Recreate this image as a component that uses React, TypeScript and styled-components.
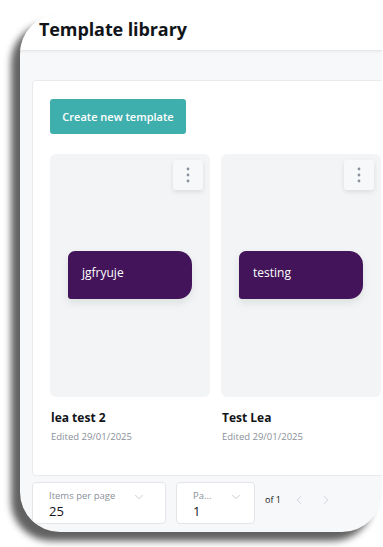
import React from 'react';
import styled, { createGlobalStyle } from 'styled-components';
import { ChevronDown, ChevronLeft, ChevronRight } from 'lucide-react';

const GlobalStyle = createGlobalStyle`
  html, body {
    margin: 0;
    padding: 0;
    background: #ffffff;
    font-family: 'Open Sans', 'Noto Sans', sans-serif;
  }
  * { box-sizing: border-box; }
`;

const Page = styled.div`
  width: 383px;
  height: 547px;
  padding: 14px 1px 0 20px;
  overflow: hidden;
`;

const Frame = styled.div`
  width: 362px;
  height: 518px;
  border-radius: 40px 0 40px 40px;
  background: #f7f8fa;
  box-shadow: -9px 9px 7px rgba(0, 0, 0, 0.62);
  overflow: hidden;
  display: flex;
  flex-direction: column;
`;

const Header = styled.header`
  height: 37px;
  flex-shrink: 0;
  background: #ffffff;
  border-bottom: 1px solid #e6e8eb;
  box-shadow: 0 1px 3px rgba(0, 0, 0, 0.05);
  display: flex;
  align-items: center;
  padding: 0 0 6px 19px;
`;

const Title = styled.h1`
  margin: 0;
  font-size: 18px;
  font-weight: 700;
  color: #111418;
  letter-spacing: -0.1px;
`;

const Main = styled.main`
  padding: 29px 0 0 12px;
  display: flex;
  flex-direction: column;
`;

const ContentCard = styled.section`
  width: 370px;
  height: 396px;
  background: #ffffff;
  border: 1px solid #e8eaed;
  border-radius: 4px;
  padding: 18px 0 0 17px;
  display: flex;
  flex-direction: column;
  align-items: flex-start;
`;

const CreateButton = styled.button`
  height: 35px;
  width: 136px;
  border: none;
  border-radius: 3px;
  background: #3fafad;
  color: #ffffff;
  font-family: inherit;
  font-size: 11px;
  font-weight: 600;
  padding: 0;
  margin-bottom: 20px;
`;

const CardsRow = styled.div`
  display: flex;
  gap: 11px;
`;

const TemplateItem = styled.div`
  width: 160px;
  display: flex;
  flex-direction: column;
`;

const Preview = styled.div`
  position: relative;
  height: 243px;
  background: #f3f4f6;
  border-radius: 6px;
  padding: 97px 18px 0 18px;
`;

const MenuButton = styled.div`
  position: absolute;
  top: 6px;
  right: 7px;
  width: 30px;
  height: 30px;
  border-radius: 3px;
  background: #f7f8fa;
  box-shadow: 0 2px 5px rgba(0, 0, 0, 0.1);
  display: flex;
  align-items: center;
  justify-content: center;
`;

const Pill = styled.div`
  height: 48px;
  background: #43145a;
  border-radius: 7px 14px 14px 3px;
  box-shadow: 0 4px 8px rgba(60, 90, 60, 0.12);
  color: #ffffff;
  font-size: 12px;
  padding: 13px 0 0 14px;
`;

const ItemName = styled.div`
  margin-top: 12px;
  font-size: 12px;
  font-weight: 700;
  color: #111418;
  padding-left: 1px;
`;

const ItemDate = styled.div`
  margin-top: 4px;
  font-size: 9.5px;
  color: #8a9099;
  padding-left: 1px;
`;

const Pagination = styled.div`
  margin-top: 6px;
  display: flex;
  align-items: center;
  gap: 10px;
`;

const Select = styled.div<{ $width: number; $arrowGap: number }>`
  width: ${({ $width }) => $width}px;
  height: 42px;
  background: #ffffff;
  border: 1px solid #e3e5e8;
  border-radius: 4px;
  padding: 6px ${({ $arrowGap }) => $arrowGap}px 0 16px;
  display: flex;
  align-items: flex-start;
  justify-content: space-between;
`;

const SelectText = styled.div`
  display: flex;
  flex-direction: column;
`;

const SelectLabel = styled.span`
  font-size: 9.5px;
  color: #8a9099;
  line-height: 14px;
`;

const SelectValue = styled.span`
  font-size: 13px;
  color: #111418;
  line-height: 17px;
  font-weight: 500;
`;

const ChevronBox = styled.div`
  padding-top: 1px;
  color: #b5bac1;
  display: flex;
`;

const OfText = styled.span`
  font-size: 9px;
  color: #111418;
  margin-top: -8px;
`;

const NavArrows = styled.div`
  display: flex;
  gap: 13px;
  color: #c5c9cf;
  margin-top: -6px;
  margin-left: 1px;
`;

const Dots = () => (
  <svg width="4" height="16" viewBox="0 0 4 16">
    <circle cx="2" cy="2" r="1.4" fill="#8b919a" />
    <circle cx="2" cy="8" r="1.4" fill="#8b919a" />
    <circle cx="2" cy="14" r="1.4" fill="#8b919a" />
  </svg>
);

const templates = [
  { id: 1, label: 'jgfryuje', name: 'lea test 2', edited: '29/01/2025' },
  { id: 2, label: 'testing', name: 'Test Lea', edited: '29/01/2025' },
];

export default function App() {
  return (
    <>
      <GlobalStyle />
      <Page>
        <Frame>
          <Header>
            <Title>Template library</Title>
          </Header>
          <Main>
            <ContentCard>
              <CreateButton>Create new template</CreateButton>
              <CardsRow>
                {templates.map(t => (
                  <TemplateItem key={t.id}>
                    <Preview>
                      <MenuButton>
                        <Dots />
                      </MenuButton>
                      <Pill>{t.label}</Pill>
                    </Preview>
                    <ItemName>{t.name}</ItemName>
                    <ItemDate>Edited {t.edited}</ItemDate>
                  </TemplateItem>
                ))}
              </CardsRow>
            </ContentCard>
            <Pagination>
              <Select $width={134} $arrowGap={19}>
                <SelectText>
                  <SelectLabel>Items per page</SelectLabel>
                  <SelectValue>25</SelectValue>
                </SelectText>
                <ChevronBox>
                  <ChevronDown size={14} strokeWidth={1.2} />
                </ChevronBox>
              </Select>
              <Select $width={79} $arrowGap={11}>
                <SelectText>
                  <SelectLabel>Pa...</SelectLabel>
                  <SelectValue>1</SelectValue>
                </SelectText>
                <ChevronBox>
                  <ChevronDown size={14} strokeWidth={1.2} />
                </ChevronBox>
              </Select>
              <OfText>of 1</OfText>
              <NavArrows>
                <ChevronLeft size={14} strokeWidth={1.4} />
                <ChevronRight size={14} strokeWidth={1.4} />
              </NavArrows>
            </Pagination>
          </Main>
        </Frame>
      </Page>
    </>
  );
}
